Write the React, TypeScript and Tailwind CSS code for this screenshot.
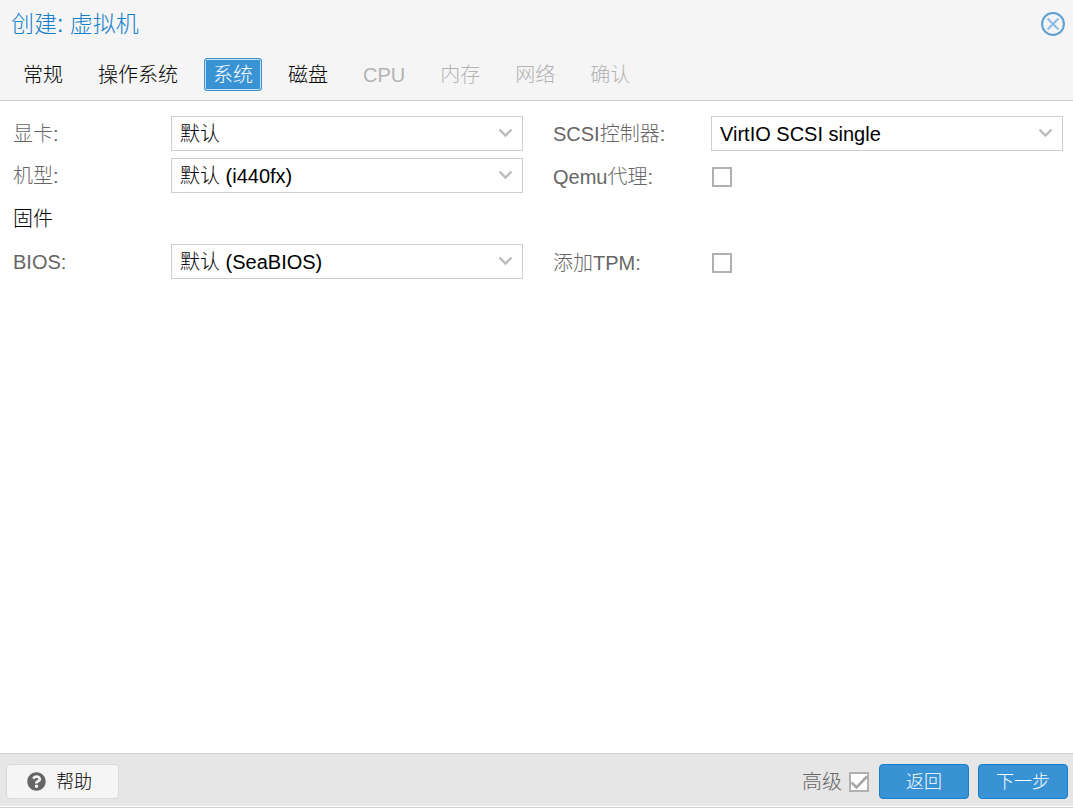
import { useState } from 'react';
import { FaQuestionCircle } from 'react-icons/fa';

const tabs = [
  { id: 'general', label: '常规', enabled: true },
  { id: 'os', label: '操作系统', enabled: true },
  { id: 'system', label: '系统', enabled: true },
  { id: 'disks', label: '磁盘', enabled: true },
  { id: 'cpu', label: 'CPU', enabled: false },
  { id: 'memory', label: '内存', enabled: false },
  { id: 'network', label: '网络', enabled: false },
  { id: 'confirm', label: '确认', enabled: false },
];

function SelectField({ id, label, options }: { id: string; label: string; options: string[] }) {
  return (
    <div className="flex h-[35px] items-center">
      <label htmlFor={id} className="w-[158px] shrink-0 text-[#666]">
        {label}:
      </label>
      <div className="relative min-w-0 flex-1">
        <select
          id={id}
          className="block h-[35px] w-full appearance-none border border-[#cfcfcf] bg-white pr-8 pl-2 text-black outline-none"
        >
          {options.map((option) => (
            <option key={option}>{option}</option>
          ))}
        </select>
        <svg
          className="pointer-events-none absolute top-3 right-2.5 h-[10px] w-[14px]"
          viewBox="0 0 14 10"
          fill="none"
          stroke="#bcbcbc"
          strokeWidth="2.4"
        >
          <path d="M0.5 1.5 L6.5 7.5 L12.5 1.5" />
        </svg>
      </div>
    </div>
  );
}

function CheckBox({ id, defaultChecked = false }: { id: string; defaultChecked?: boolean }) {
  return (
    <span className="relative block h-5 w-5 shrink-0">
      <input
        id={id}
        type="checkbox"
        defaultChecked={defaultChecked}
        className="peer block h-5 w-5 appearance-none border-2 border-[#b0b0b0] bg-white"
      />
      <svg
        className="pointer-events-none absolute inset-0 hidden h-5 w-5 peer-checked:block"
        viewBox="0 0 20 20"
        fill="none"
        stroke="#a6a6a6"
        strokeWidth="2.6"
      >
        <path d="M2.5 10.5 L7.5 15.5 L18 4.5" />
      </svg>
    </span>
  );
}

function CheckField({ id, label }: { id: string; label: string }) {
  return (
    <div className="flex h-[35px] items-center pt-[2px]">
      <label htmlFor={id} className="w-[159px] shrink-0 text-[#666]">
        {label}:
      </label>
      <CheckBox id={id} />
    </div>
  );
}

export default function App() {
  const [activeTab, setActiveTab] = useState('system');

  return (
    <div className="flex min-h-screen flex-col bg-white font-['Liberation_Sans','Noto_Sans_CJK_SC',sans-serif] text-[20px] leading-6 font-light">
      <header className="border-b border-[#cfcfcf] bg-[#f5f5f5]">
        <div className="flex h-[48px] items-center justify-between pr-2 pl-[11px]">
          <h1 className="text-[23px] text-[#157fcc]">创建: 虚拟机</h1>
          <button type="button" aria-label="关闭">
            <svg className="h-6 w-6" viewBox="0 0 24 24" fill="none" stroke="#5fa0d2">
              <circle cx="12" cy="12" r="10.9" strokeWidth="2" />
              <path d="M6.5 6.5 L17.5 17.5 M17.5 6.5 L6.5 17.5" stroke="#8fbfe6" strokeWidth="2.2" />
            </svg>
          </button>
        </div>
        <nav className="flex gap-[17px] pt-[10px] pb-[9px] pl-[14px]">
          {tabs.map((tab) => (
            <button
              key={tab.id}
              type="button"
              disabled={!tab.enabled}
              onClick={() => setActiveTab(tab.id)}
              className={
                tab.id === activeTab
                  ? 'h-[33px] rounded-[3px] border border-[#3892d4] bg-[#3892d4] px-2 text-white inset-ring inset-ring-[#c5dff3]'
                  : 'h-[33px] border border-transparent px-2 text-black disabled:text-[#b3b3b3]'
              }
            >
              {tab.label}
            </button>
          ))}
        </nav>
      </header>

      <main className="flex-1 pt-[15px] pr-[10px] pl-[13px]">
        <div className="grid grid-cols-2 gap-x-[30px] gap-y-[7px]">
          <SelectField id="vga" label="显卡" options={['默认']} />
          <SelectField id="scsihw" label="SCSI控制器" options={['VirtIO SCSI single']} />
          <SelectField id="machine" label="机型" options={['默认 (i440fx)']} />
          <CheckField id="agent" label="Qemu代理" />
          <h2 className="col-span-2 flex h-[37px] items-center text-black">固件</h2>
          <SelectField id="bios" label="BIOS" options={['默认 (SeaBIOS)']} />
          <CheckField id="tpm" label="添加TPM" />
        </div>
      </main>

      <footer className="border-b border-[#cfcfcf] bg-white pb-px">
        <div className="flex items-center border-t border-[#cfcfcf] bg-[#e6e6e6] pt-[10px] pr-[5px] pb-[7px] pl-[6px]">
          <button
            type="button"
            className="flex h-[35px] w-[113px] items-center gap-[10px] rounded-[4px] border border-[#d8d8d8] bg-[#f5f5f5] pl-5 text-[18px] text-black"
          >
            <FaQuestionCircle className="h-[19px] w-[19px] text-[#666]" />
            帮助
          </button>
          <div className="ml-auto flex items-center gap-[9px]">
            <div className="flex items-center gap-[7px] pr-px">
              <label htmlFor="advanced" className="text-[#666]">
                高级
              </label>
              <CheckBox id="advanced" defaultChecked />
            </div>
            <button
              type="button"
              className="h-[35px] w-[90px] rounded-[4px] border border-[#157fcc] bg-[#3892d4] text-[18px] text-white"
            >
              返回
            </button>
            <button
              type="button"
              className="h-[35px] w-[90px] rounded-[4px] border border-[#157fcc] bg-[#3892d4] text-[18px] text-white"
            >
              下一步
            </button>
          </div>
        </div>
      </footer>
    </div>
  );
}
